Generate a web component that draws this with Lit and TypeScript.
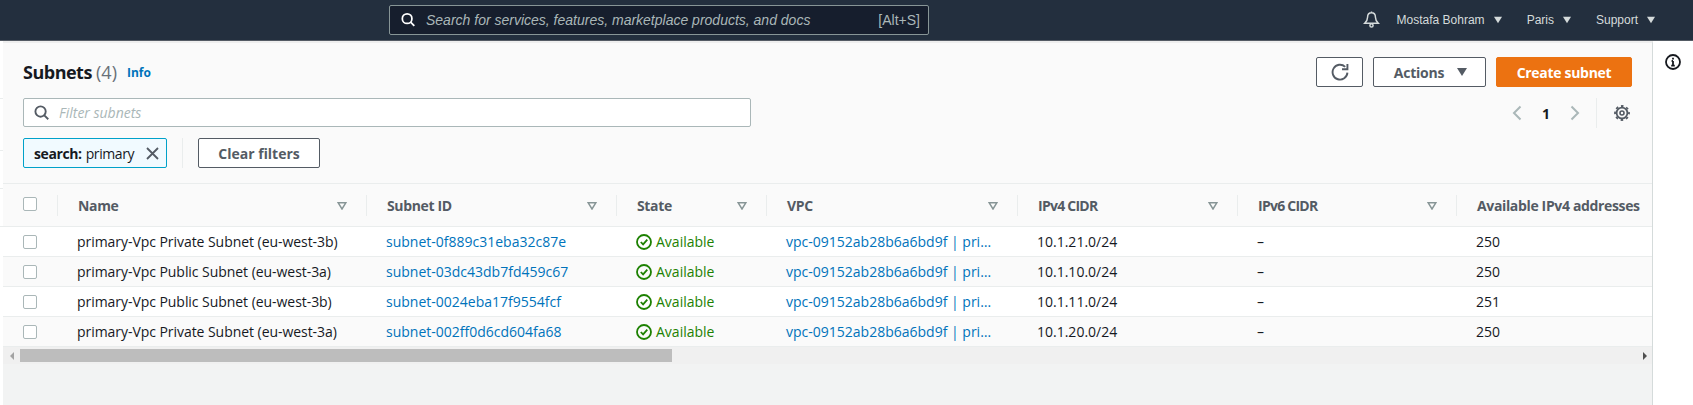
import { LitElement, html, css } from "lit";
import { customElement } from "lit/decorators.js";

const rows = [
  ["primary-Vpc Private Subnet (eu-west-3b)", "subnet-0f889c31eba32c87e", "10.1.21.0/24", "250"],
  ["primary-Vpc Public Subnet (eu-west-3a)", "subnet-03dc43db7fd459c67", "10.1.10.0/24", "250"],
  ["primary-Vpc Public Subnet (eu-west-3b)", "subnet-0024eba17f9554fcf", "10.1.11.0/24", "251"],
  ["primary-Vpc Private Subnet (eu-west-3a)", "subnet-002ff0d6cd604fa68", "10.1.20.0/24", "250"],
];
const cols = ["Name", "Subnet ID", "State", "VPC", "IPv4 CIDR", "IPv6 CIDR", "Available IPv4 addresses"];

const searchIcon = (cls: string) => html`<svg class=${cls} viewBox="0 0 16 16" fill="none" stroke="currentColor" stroke-width="2"><circle cx="7" cy="7" r="5.5"/><path d="M11 11l4.2 4.2"/></svg>`;
const caret = (cls: string) => html`<svg class=${cls} viewBox="0 0 12 10"><path d="M1 1h10L6 9z" fill="currentColor"/></svg>`;
const filterIcon = html`<svg class="sort" viewBox="0 0 10 8" fill="none" stroke="#879596" stroke-width="1.5"><path d="M1.2 .8h7.6L5 7z"/></svg>`;
const checkIcon = html`<svg class="ok" viewBox="0 0 16 16" fill="none" stroke="#1d8102" stroke-width="1.8"><circle cx="8" cy="8" r="7"/><path d="M4.8 8l2.3 2.4 4.2-4.8"/></svg>`;

@customElement("app-root")
export class AppRoot extends LitElement {
  static styles = css`
    :host { display: block; width: 100%; height: 405px; overflow: hidden; font-family: "Open Sans", "Noto Sans", sans-serif; font-size: 14px; color: #16191f; background: #fff; }
    * { box-sizing: border-box; }
    svg { display: block; flex: none; }
    .top { height: 41px; background: #232f3e; border-bottom: 1px solid #545b64; display: flex; align-items: center; font-family: "Liberation Sans", sans-serif; color: #d5dbdb; }
    .gsearch { margin-left: 389px; width: 540px; height: 30px; margin-top: -1px; background: #161e2d; border: 1px solid #879596; border-radius: 2px; display: flex; align-items: center; padding: 0 8px 0 11px; color: #aab7b8; }
    .gs-ico { width: 14px; height: 15px; color: #fff; margin-right: 11px; }
    .gsearch i { flex: 1; font-size: 14px; }
    .gsearch span { font-size: 14px; }
    .nav { margin-left: auto; display: flex; align-items: center; font-size: 12px; padding-right: 37px; margin-top: -1px; }
    .bell { width: 17px; height: 17px; margin-right: 17px; color: #d5dbdb; }
    .nav span { margin-right: 8px; }
    .nav-caret { width: 10px; height: 8px; color: #d5dbdb; margin-right: 24px; }
    .nav-caret:last-child { margin-right: 0; }
    .body { display: flex; height: 364px; }
    .gutter { width: 3px; background: #fff; display: flex; flex-direction: column; }
    .gl { border-bottom: 1px solid #eaeded; }
    .gl-a { height: 58px; }
    .gl-b { height: 52px; }
    .gl-c { height: 38px; }
    .main { width: 1650px; background: #f2f3f3; border-top: 2px solid #eeeeee; border-right: 1px solid #d5dbdb; display: flex; flex-direction: column; }
    .side { flex: 1; background: #fff; display: flex; justify-content: center; padding-top: 13px; }
    .side svg { width: 16px; height: 16px; }
    .head { height: 141px; background: #fafafa; border-bottom: 1px solid #eaeded; padding: 14px 20px 0; display: flex; flex-direction: column; }
    .r1, .r2, .r3 { display: flex; align-items: center; }
    .r1 { height: 30px; }
    .r2 { height: 30px; margin-top: 11px; }
    .r3 { height: 30px; margin-top: 10px; }
    h1 { margin: 0; font-size: 18px; font-weight: 700; line-height: 24px; letter-spacing: -0.5px; }
    h1 span { font-weight: 400; color: #687078; letter-spacing: 0; }
    .info { color: #0073bb; font-size: 12px; font-weight: 700; margin-left: 10px; }
    .actions { margin-left: auto; display: flex; gap: 10px; }
    .btn { height: 30px; display: flex; align-items: center; justify-content: center; border: 1px solid #545b64; border-radius: 2px; background: #fff; color: #545b64; font-weight: 700; font-size: 14px; }
    .btn-ref { width: 47px; }
    .btn-ref svg { width: 18px; height: 18px; }
    .btn-act { width: 113px; gap: 12px; padding-left: 3px; letter-spacing: -0.2px; }
    .btn-act svg { width: 12px; height: 10px; }
    .btn-new { width: 136px; background: #ec7211; border-color: #ec7211; color: #fff; letter-spacing: -0.3px; }
    .filter { width: 728px; height: 29px; background: #fff; border: 1px solid #aab7b8; border-radius: 2px; display: flex; align-items: center; padding-left: 10px; color: #aab7b8; font-size: 14px; margin-top: -1px; }
    .f-ico { width: 15px; height: 15px; color: #545b64; margin-right: 10px; }
    .pager { margin-left: auto; display: flex; align-items: center; height: 30px; }
    .chev { width: 10px; height: 16px; color: #aab7b8; }
    .page { font-weight: 700; width: 48px; text-align: center; font-size: 14px; }
    .pdiv { width: 1px; height: 30px; background: #eaeded; margin: 0 17px 0 16px; }
    .gear { width: 16px; height: 16px; color: #545b64; margin-right: 2px; }
    .token { width: 144px; height: 30px; background: #f1faff; border: 1px solid #00a1c9; border-radius: 2px; display: flex; align-items: center; padding-left: 10px; font-size: 14px; color: #16191f; letter-spacing: -0.4px; }
    .token b { margin-right: 4px; }
    .token svg { width: 13px; height: 13px; margin-left: auto; margin-right: 7px; color: #545b64; }
    .tdiv { width: 1px; height: 30px; background: #eaeded; margin: 0 15px 0 15px; }
    .btn-clear { width: 122px; }
    .grid { display: grid; grid-template-columns: 54px 309px 250px 150px 251px 220px 219px 196px; }
    .th { height: 43px; background: #fafafa; border-bottom: 1px solid #eaeded; display: flex; align-items: flex-start; padding-top: 11px; }
    .th-in { height: 21px; flex: 1; min-width: 0; border-left: 1px solid #eaeded; display: flex; align-items: center; padding-left: 20px; padding-right: 19px; font-weight: 700; color: #545b64; justify-content: space-between; white-space: nowrap; letter-spacing: -0.35px; }
    .th-in.caps { letter-spacing: -0.75px; }
    .th.c0 { padding-left: 20px; padding-top: 13px; }
    .sort { width: 10px; height: 8px; }
    .box { width: 14px; height: 14px; background: #fff; border: 1px solid #aab7b8; border-radius: 2px; }
    .td { height: 30px; border-bottom: 1px solid #eaeded; display: flex; align-items: center; padding-left: 20px; white-space: nowrap; color: #16191f; min-width: 0; background: #fff; }
    .td.alt { background: #fafafa; }
    .td.c0 { padding: 0 0 0 20px; }
    .name { letter-spacing: -0.05px; }
    .link { color: #0073bb; }
    .state { color: #1d8102; gap: 4px; }
    .ok { width: 16px; height: 16px; }
    .bar { height: 17px; background: #f0f0f0; display: flex; align-items: center; }
    .sa { width: 0; height: 0; border-style: solid; }
    .sa-l { border-width: 4px 4px 4px 0; border-color: transparent #a3a3a3 transparent transparent; margin-left: 7px; }
    .thumb { height: 13px; width: 652px; background: #bdbdbd; margin-left: 6px; }
    .sa-r { border-width: 4px 0 4px 4px; border-color: transparent transparent transparent #505050; margin-left: auto; margin-right: 5px; }
    .rest { flex: 1; background: #f2f3f3; }
  `;

  render() {
    return html`
      <div class="top">
        <div class="gsearch">${searchIcon("gs-ico")}<i>Search for services, features, marketplace products, and docs</i><span>[Alt+S]</span></div>
        <div class="nav">
          <svg class="bell" viewBox="0 0 16 16" fill="none" stroke="currentColor" stroke-width="1.4"><path d="M8 1.6c-2.6 0-3.7 2-3.7 4.2 0 2.8-1.1 4.2-2.7 5.8h12.8c-1.6-1.6-2.7-3-2.7-5.8 0-2.2-1.1-4.2-3.7-4.2zM8 .5v1.1"/><circle cx="8" cy="13.6" r="1.5"/></svg>
          <span>Mostafa Bohram</span>${caret("nav-caret")}
          <span>Paris</span>${caret("nav-caret")}
          <span>Support</span>${caret("nav-caret")}
        </div>
      </div>
      <div class="body">
        <div class="gutter"><div class="gl gl-a"></div><div class="gl gl-b"></div><div class="gl gl-c"></div><div class="gl gl-c"></div></div>
        <div class="main">
          <div class="head">
            <div class="r1">
              <h1>Subnets <span>(4)</span></h1><a class="info">Info</a>
              <div class="actions">
                <div class="btn btn-ref"><svg viewBox="0 0 16 16" fill="none" stroke="currentColor" stroke-width="1.7"><path d="M14.6 8.6A6.6 6.6 0 1 1 12.6 3.4"/><path d="M14.6 .8v4.8H9.8"/></svg></div>
                <div class="btn btn-act">Actions ${caret("")}</div>
                <div class="btn btn-new">Create subnet</div>
              </div>
            </div>
            <div class="r2">
              <div class="filter">${searchIcon("f-ico")}<i>Filter subnets</i></div>
              <div class="pager">
                <svg class="chev" viewBox="0 0 10 16" fill="none" stroke="currentColor" stroke-width="2"><path d="M8.5 1.5L2 8l6.5 6.5"/></svg>
                <div class="page">1</div>
                <svg class="chev" viewBox="0 0 10 16" fill="none" stroke="currentColor" stroke-width="2"><path d="M1.5 1.5L8 8l-6.5 6.5"/></svg>
                <div class="pdiv"></div>
                <svg class="gear" viewBox="0 0 16 16" fill="none" stroke="currentColor"><circle cx="8" cy="8" r="5.4" stroke-width="1.8"/><circle cx="8" cy="8" r="7" stroke-width="1.8" stroke-dasharray="2.6 2.9" stroke-dashoffset="1.3"/><circle cx="8" cy="8" r="2" stroke-width="1.6"/></svg>
              </div>
            </div>
            <div class="r3">
              <div class="token"><b>search:</b> primary<svg viewBox="0 0 13 13" fill="none" stroke="currentColor" stroke-width="1.8"><path d="M1 1l11 11M12 1L1 12"/></svg></div>
              <div class="tdiv"></div>
              <div class="btn btn-clear">Clear filters</div>
            </div>
          </div>
          <div class="grid">
            <div class="th c0"><div class="box"></div></div>
            ${cols.map((c, i) => html`<div class="th"><div class="th-in ${i === 4 || i === 5 ? "caps" : ""}">${c}${i < 6 ? filterIcon : ""}</div></div>`)}
            ${rows.map((r, i) => {
              const alt = i % 2 ? "alt" : "";
              return html`
                <div class="td c0 ${alt}"><div class="box"></div></div>
                <div class="td ${alt}"><span class="name">${r[0]}</span></div>
                <div class="td ${alt}"><span class="link">${r[1]}</span></div>
                <div class="td state ${alt}">${checkIcon}<span>Available</span></div>
                <div class="td ${alt}"><span class="link">vpc-09152ab28b6a6bd9f | pri…</span></div>
                <div class="td ${alt}"><span>${r[2]}</span></div>
                <div class="td ${alt}"><span>–</span></div>
                <div class="td ${alt}"><span>${r[3]}</span></div>
              `;
            })}
          </div>
          <div class="bar"><div class="sa sa-l"></div><div class="thumb"></div><div class="sa sa-r"></div></div>
          <div class="rest"></div>
        </div>
        <div class="side">
          <svg viewBox="0 0 16 16" fill="none" stroke="#16191f" stroke-width="1.8"><circle cx="8" cy="8" r="7"/><path d="M8 7v4.6M6.2 11.6h3.6M6.6 7H8M8 3.8v1.8"/></svg>
        </div>
      </div>
    `;
  }
}
